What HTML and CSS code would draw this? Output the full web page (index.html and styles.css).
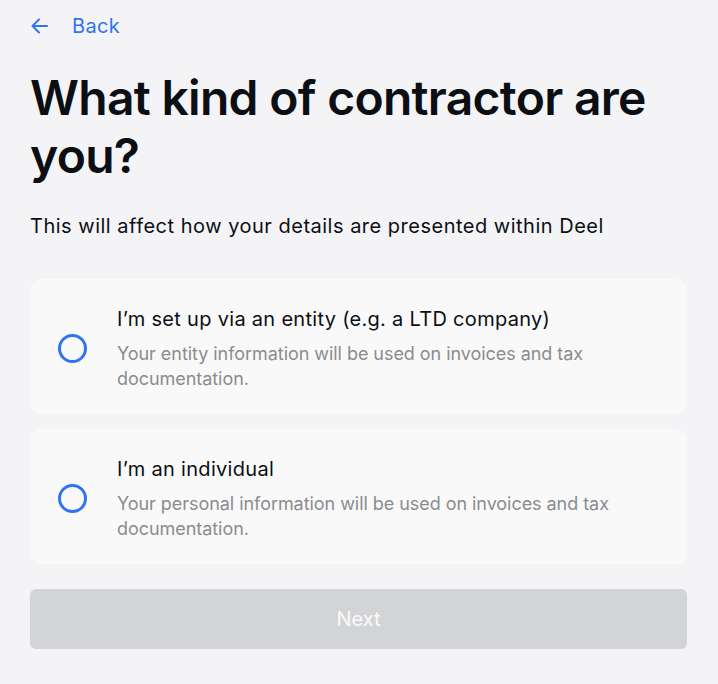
FILE: index.html
```html
<!DOCTYPE html>
<html>
<head>
  <title>Contractor type</title>
  <meta charset="UTF-8" />
  <meta name="viewport" content="width=device-width, initial-scale=1.0"/>
  <link rel="stylesheet" href="styles.css">
</head>
<body>
  <a class="back" href="#">
    <svg width="20" height="20" viewBox="0 0 20 20" fill="none" stroke="currentColor" stroke-width="2" stroke-linecap="round" stroke-linejoin="round">
      <path d="M17 10H3"/>
      <path d="M9 3.5L2.5 10L9 16.5"/>
    </svg>
    <span>Back</span>
  </a>

  <h1>What kind of contractor are you?</h1>
  <p class="lead">This will affect how your details are presented within Deel</p>

  <div class="options">
    <label class="option">
      <span class="radio"></span>
      <span class="option-text">
        <span class="option-title">I’m set up via an entity (e.g. a LTD company)</span>
        <span class="option-desc">Your entity information will be used on invoices and tax documentation.</span>
      </span>
    </label>
    <label class="option">
      <span class="radio"></span>
      <span class="option-text">
        <span class="option-title">I’m an individual</span>
        <span class="option-desc">Your personal information will be used on invoices and tax documentation.</span>
      </span>
    </label>
  </div>

  <button class="next" disabled>Next</button>
</body>
</html>
```

FILE: styles.css
```css
:root {
  --bg: #f4f4f6;
  --card: #f9f9f9;
  --blue: #2f74f0;
  --text: #0b0f14;
  --muted: #8a8c90;
}
body {
  margin: 0;
  padding: 13px 31px 0 30px;
  background: var(--bg);
  color: var(--text);
  font-family: Inter, "Noto Sans", sans-serif;
}
.back {
  display: flex;
  align-items: center;
  gap: 22px;
  color: var(--blue);
  text-decoration: none;
  font-size: 20px;
  line-height: 26px;
  letter-spacing: 0.3px;
}
.back svg {
  display: block;
}
h1 {
  margin: 30px 0 0;
  font-size: 48px;
  line-height: 58px;
  font-weight: 600;
  letter-spacing: -0.7px;
}
.lead {
  margin: 28px 0 0;
  font-size: 20px;
  line-height: 26px;
  letter-spacing: 0.5px;
}
.options {
  display: flex;
  flex-direction: column;
  gap: 15px;
  margin-top: 40px;
}
.option {
  display: flex;
  align-items: center;
  gap: 30px;
  background: var(--card);
  border-radius: 12px;
  padding: 26px 28px 23px;
  cursor: pointer;
}
.radio {
  flex: none;
  width: 23px;
  height: 23px;
  border: 3px solid var(--blue);
  border-radius: 50%;
}
.option-text {
  display: flex;
  flex-direction: column;
  gap: 8px;
}
.option-title {
  font-size: 20px;
  line-height: 28px;
  letter-spacing: 0.3px;
}
.option-desc {
  font-size: 18px;
  line-height: 25px;
  letter-spacing: -0.05px;
  color: var(--muted);
}
.next {
  display: block;
  width: 100%;
  margin-top: 25px;
  height: 60px;
  border: none;
  border-radius: 6px;
  background: #d3d4d6;
  color: #fafafa;
  font-family: inherit;
  font-size: 20px;
}
```
